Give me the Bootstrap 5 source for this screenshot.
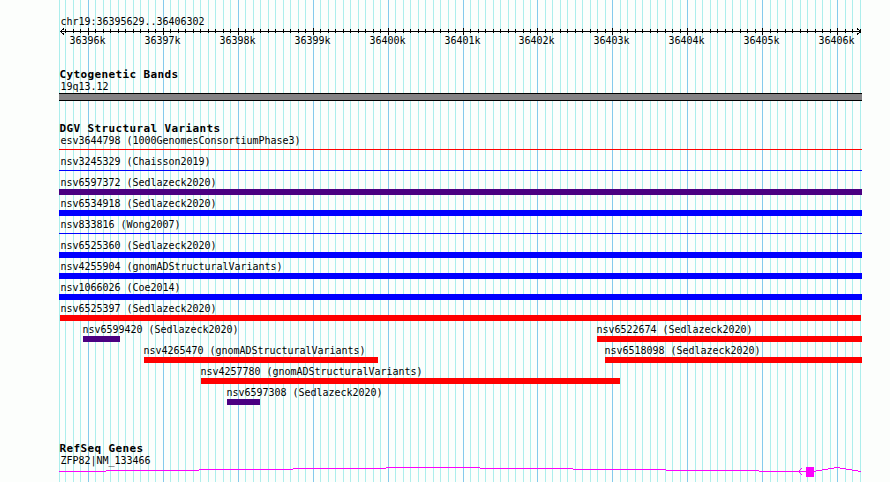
<!DOCTYPE html>
<html lang="en">
<head>
<meta charset="utf-8">
<meta name="viewport" content="width=device-width, initial-scale=1">
<title>chr19:36395629..36406302</title>
<link rel="stylesheet" href="https://cdn.jsdelivr.net/npm/bootstrap@5.3.0/dist/css/bootstrap.min.css">
<style>
body{background:#fcfefc;color:#000;font:10px/12px "DejaVu Sans Mono",monospace;letter-spacing:-.02px}
.browser{width:890px;height:482px}
.grid-lines{z-index:0}
.tracks{z-index:1;padding:16px 28px 0 59px}
svg{display:block;shape-rendering:crispEdges}
.lbl{height:12px;padding-left:1.5px;white-space:nowrap}
.track-title{font-size:11px;line-height:14px;height:13px;font-weight:700;letter-spacing:.378px;margin:0;padding-left:.4px;white-space:nowrap}
.scale{height:52px}
.scale text{font-size:10px;fill:#000}
.cyto{height:8px;background:#848284;border:solid #000;border-width:1px 0;margin-bottom:21px}
.feature-row{height:21px}
.feature{flex:none}
.feature.inset .lbl{margin-left:-.5px;padding-left:0}
.feature.flush .lbl{padding-left:.5px}
.bar{height:6px}
.bar.thin{height:1px;margin-top:2px}
.c-red{background:#f00}
.c-blue{background:#00f}
.c-purple{background:#4b0082}
.variants{height:307px}
</style>
<script src="https://cdn.jsdelivr.net/npm/bootstrap@5.3.0/dist/js/bootstrap.bundle.min.js"></script>
</head>
<body>
<main class="browser position-relative overflow-hidden">
  <svg class="grid-lines position-absolute top-0 start-0" id="grid" width="890" height="482" aria-hidden="true"></svg>
  <div class="tracks position-relative d-flex flex-column">
    <section class="scale">
      <div class="lbl">chr19:36395629..36406302</div>
      <svg id="ruler" width="803" height="32"></svg>
    </section>
    <section>
      <h2 class="track-title">Cytogenetic Bands</h2>
      <div class="lbl">19q13.12</div>
      <div class="cyto"></div>
    </section>
    <section>
      <h2 class="track-title">DGV Structural Variants</h2>
      <div class="variants" id="variants"></div>
    </section>
    <section>
      <h2 class="track-title">RefSeq Genes</h2>
      <div class="lbl">ZFP82|NM_133466</div>
      <svg width="803" height="15" fill="none" stroke="#fc02fc">
        <path d="M0 4.5H47M47 3.5H140M140 2.5H234M234 1.5H327M327 .5H421M421 1.5H514M514 2.5H607M607 3.5H700M700 4.5H757M755 4.5H757M757 3.5H763M763 2.5H769M769 1.5H775M775 .5H781M781 1.5H787M787 2.5H793M793 3.5H799M799 4.5H802"/>
        <path fill="#fc02fc" stroke="none" d="M747 0h8v10h-8zM740 3h1v1h-1zM740 5h1v1h-1zM741 2h1v1h-1zM741 6h1v1h-1zM742 1h1v1h-1zM742 7h1v1h-1z"/>
      </svg>
    </section>
  </div>
</main>
<script>
const start = 36395629, left = 59;
const toX = bp => Math.round(59.95 + (bp - start) * 800 / 10673);

let minor = 'M59.5 0V482', major = '', ticks = '', labels = '';
for (let bp = 36395700; bp <= 36406300; bp += 100) {
  const x = toX(bp), rx = x - left + .5;
  if (bp % 1000 === 0) {
    major += `M${x + .5} 0V482`;
    ticks += `M${rx} 0V7`;
    labels += `<text x="${x - left - 18.5}" y="16">${bp / 1000}k</text>`;
  } else {
    minor += `M${x + .5} 0V482`;
    ticks += `M${rx} 1V5`;
  }
}
document.getElementById('grid').innerHTML =
  `<path d="${minor}" stroke="#aceeec"/><path d="${major}" stroke="#84caec"/>`;
document.getElementById('ruler').innerHTML =
  `<path d="M1 3.5H802${ticks}M5 .5L1.5 3.5L5 6.5M798 .5L801.5 3.5L798 6.5" stroke="#000" fill="none"/>${labels}`;

const rows = [
  [['esv3644798 (1000GenomesConsortiumPhase3)', 59, 862, 'red', 'thin']],
  [['nsv3245329 (Chaisson2019)', 59, 862, 'blue', 'thin']],
  [['nsv6597372 (Sedlazeck2020)', 59, 862, 'purple']],
  [['nsv6534918 (Sedlazeck2020)', 59, 862, 'blue']],
  [['nsv833816 (Wong2007)', 59, 862, 'blue', 'thin']],
  [['nsv6525360 (Sedlazeck2020)', 59, 862, 'blue']],
  [['nsv4255904 (gnomADStructuralVariants)', 59, 862, 'blue']],
  [['nsv1066026 (Coe2014)', 59, 862, 'blue']],
  [['nsv6525397 (Sedlazeck2020)', 60, 861, 'red']],
  [['nsv6599420 (Sedlazeck2020)', 83, 120, 'purple'], ['nsv6522674 (Sedlazeck2020)', 597, 862, 'red']],
  [['nsv4265470 (gnomADStructuralVariants)', 144, 378, 'red'], ['nsv6518098 (Sedlazeck2020)', 605, 862, 'red']],
  [['nsv4257780 (gnomADStructuralVariants)', 201, 620, 'red']],
  [['nsv6597308 (Sedlazeck2020)', 227, 260, 'purple']]
];
document.getElementById('variants').innerHTML = rows.map(row => {
  let end = left;
  return '<div class="feature-row d-flex">' + row.map(([name, a, b, color, thin = '']) => {
    const gap = a - end;
    end = b;
    const kind = gap > 1 ? 'inset' : gap === 1 ? 'flush' : '';
    return `<div class="feature ${kind}" style="margin-left:${gap}px;width:${b - a}px">` +
      `<div class="lbl">${name}</div><div class="bar c-${color} ${thin}"></div></div>`;
  }).join('') + '</div>';
}).join('');
</script>
</body>
</html>
